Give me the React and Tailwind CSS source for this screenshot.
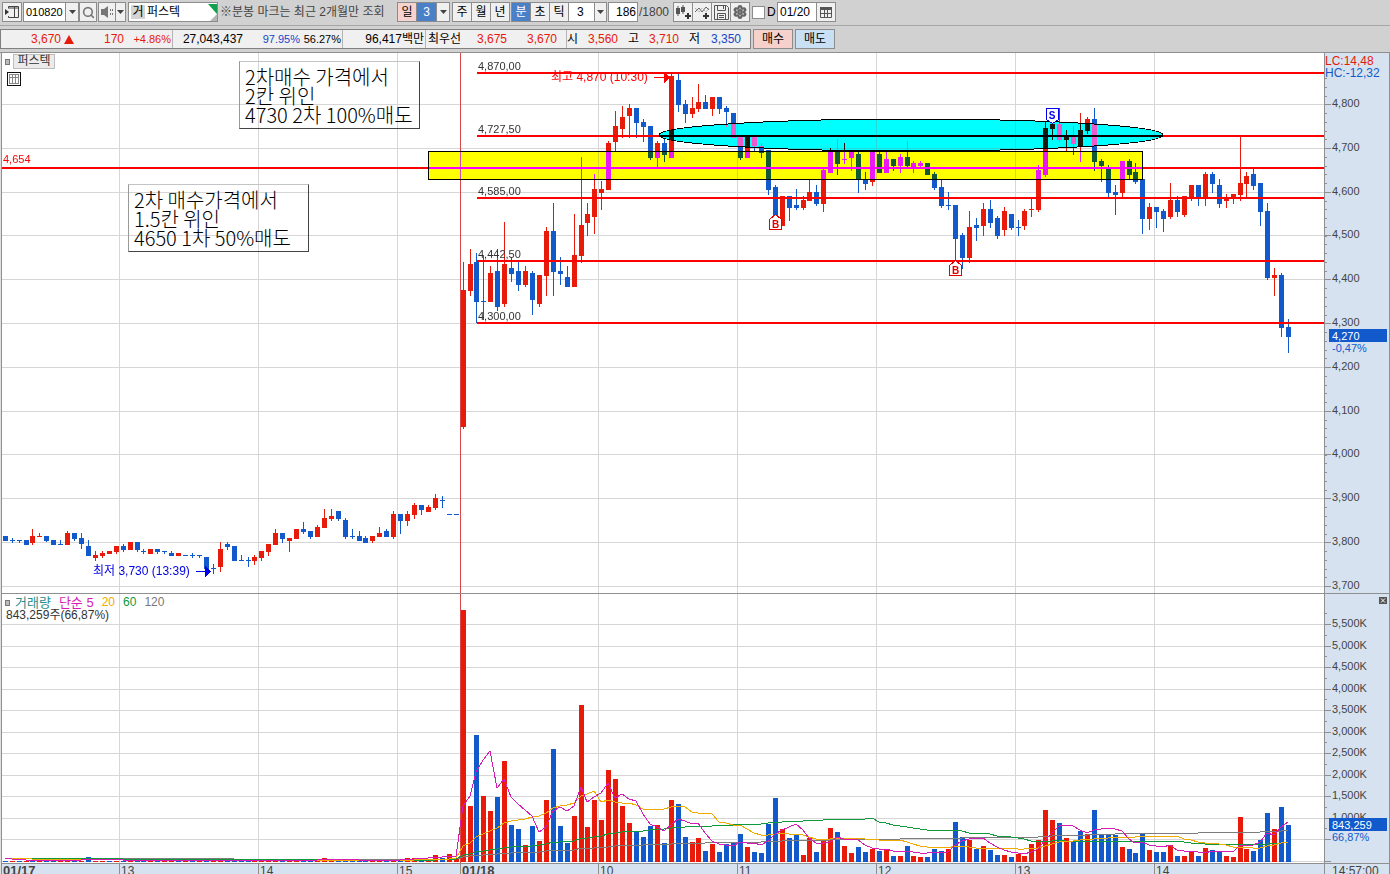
import { Search, Save, Settings } from 'lucide-react';

// direction high top bottom low, one bar per entry
const CANDLES = `
b 536 536 541 541|b 538 540 541 543|b 540 540 541 543|b 540 540 545 545|r 529 536 543 545|r 533 536 537 537
b 536 536 541 542|b 540 540 545 545|b 540 544 545 545|r 531 533 545 545|b 533 533 539 541|b 533 538 544 549
b 540 546 556 556|r 551 555 558 561|r 551 553 556 558|r 551 551 554 554|r 546 546 552 554|b 544 546 550 552
r 542 542 550 550|b 542 542 550 552|b 549 551 552 554|r 549 549 554 554|b 549 549 552 554|b 551 551 552 554
b 551 553 556 556|r 553 553 556 556|b 555 555 556 556|b 553 555 556 558|b 555 555 556 558|b 557 557 569 569
b 564 568 569 574|r 542 549 567 572|b 542 544 547 550|b 546 546 561 561|b 555 560 561 561|b 557 560 561 567
r 555 557 561 565|r 551 551 558 561|r 544 544 552 556|r 529 533 545 545|b 533 533 539 543|r 538 538 541 552
r 529 529 539 539|b 522 529 532 534|b 531 531 537 539|r 525 527 537 537|r 509 518 528 528|r 509 516 519 521
b 511 511 519 521|b 518 520 537 539|b 529 536 537 539|b 531 536 541 541|b 536 538 543 543|r 536 536 541 543
r 527 533 537 537|b 529 531 537 537|r 511 514 537 539|b 514 514 521 534|r 511 514 521 526|r 503 505 515 519
b 505 505 510 515|r 505 507 512 512|r 494 498 508 510|b 496 500 501 508|b 514 514 515 515|b 514 514 515 515
r 262 290 427 429|r 249 264 291 296|b 253 262 302 323|b 256 301 302 320|r 266 273 302 302|b 249 271 307 311
r 222 264 304 307|b 257 268 274 282|b 262 271 285 291|r 266 271 285 287|b 271 273 300 315|r 275 275 304 307
r 227 231 276 296|b 203 231 272 296|b 257 271 274 285|b 266 277 287 287|r 214 255 287 287|r 157 225 256 263
r 203 214 223 236|r 174 189 217 234|r 181 189 193 210|r 141 143 190 190|r 111 126 142 151|r 106 117 129 138
r 104 108 116 138|b 108 108 123 138|b 119 122 127 142|b 126 126 158 160|r 141 143 158 167|b 138 143 155 162
r 73 76 158 158|b 73 80 105 112|b 100 104 114 123|r 97 108 114 118|r 84 102 109 112|b 95 102 109 109
r 97 97 109 116|b 97 97 109 114|b 106 108 112 127|b 113 113 138 138|b 136 136 158 160|r 136 136 158 158
b 136 136 146 151|b 143 146 153 158|b 150 150 190 195|b 185 187 216 218|r 196 196 226 226|b 196 196 208 221
b 189 205 208 210|r 196 200 208 210|r 179 192 201 201|b 185 192 204 206|r 168 170 204 212|r 148 150 173 173
b 139 150 164 175|r 143 159 160 164|r 152 152 158 171|b 151 154 180 193|b 172 180 184 190|r 152 152 182 186
b 152 154 173 173|r 152 159 173 173|b 159 159 166 171|r 154 157 166 173|b 141 157 166 168|r 161 163 168 173
r 161 163 166 168|b 163 163 175 175|b 172 174 188 190|b 179 187 206 208|b 192 205 206 210|b 205 205 239 261
b 233 235 258 269|r 211 227 258 263|b 218 225 228 241|r 203 209 226 236|b 200 209 223 228|b 216 218 236 239
r 207 211 230 236|b 214 214 228 230|b 220 227 228 236|r 209 211 226 230|r 198 209 210 217|r 165 170 210 212
r 122 128 175 177|r 122 124 129 140|b 108 124 140 142|r 130 136 140 151|b 126 136 144 155|r 113 130 146 162
r 117 119 131 134|b 108 119 162 171|b 159 161 166 182|b 165 169 193 197|b 185 192 195 215|r 161 161 193 197
b 159 161 175 179|b 163 172 182 184|b 179 179 219 234|r 203 207 219 230|b 207 207 212 228|b 209 211 219 232
r 183 200 217 219|b 196 200 212 217|r 196 196 215 217|r 185 185 198 201|b 185 185 198 206|r 172 174 198 206
b 172 174 184 193|b 179 185 204 208|r 194 198 201 208|r 194 194 198 204|r 136 183 195 201|r 172 176 184 198
b 168 174 186 190|b 183 183 212 226|b 203 211 278 280|r 268 275 278 296|b 273 275 328 337|b 319 327 337 353`
  .trim()
  .split(/[|\n]/)
  .map((row) => {
    const [dir, ...values] = row.split(' ');
    return [dir, ...values.map(Number)];
  });

// bar heights of the volume pane, each with its colour letter
const VOLUMES = `
b1 r1 b1 r1 b1 r1 b1 b1 r1 r3 b1 r1 b5 r1 r1 b1 r1 b1 r1 b1 b1 r1 b1 r1 r1 b1 r1 b1 r1 b3 r1 r1 b1
b1 b1 b1 r1 r1 r1 r3 b1 r1 r1 b1 b1 r1 r4 r1 b1 b1 b1 b1 b1 r1 r1 b1 r1 b1 r4 r4 b3 r3 r7 b4 r8 r4
r252 r56 b127 r66 r51 b65 r101 b37 b33 r17 b36 r21 r62 b113 b36 b19 r46 r157 r35 r62 r42 r92 r83 r56
r39 b31 b25 b36 r37 b19 r62 b58 b25 r20 r24 b11 r18 b10 b18 b20 b28 r15 b10 b9 b38 b64 r33 b24 b27 r7
r24 b10 r22 r34 b30 r16 r9 b15 b10 r13 b11 r12 b6 r6 b16 r6 r5 b5 b13 b11 r13 b40 b25 r22 b13 r16 b12
b7 r7 b5 r8 r6 r18 r22 r52 r42 b39 r24 b20 b31 r28 b52 b27 b28 b27 r15 b13 b9 b29 r12 b10 b10 r17 b6
r6 r10 b6 r14 b12 b10 r6 r5 r45 r13 b11 b22 b49 r33 b55 b37`
  .trim()
  .split(/\s+/)
  .map((bar) => [bar[0], Number(bar.slice(1))]);

const RED = '#e81a0a';
const BLUE = '#125acb';
const GRID = '#d6d6d6';
const VOLUME_BASE = 862;

const HOUR_LINES = [119, 258, 397, 598, 737, 876, 1015, 1154];
const HOURS = ['13', '14', '15', '10', '11', '12', '13', '14'];
const PRICES = [4800, 4700, 4600, 4500, 4400, 4300, 4200, 4100, 4000, 3900, 3800, 3700];
const VOLUME_STEPS = [5500, 5000, 4500, 4000, 3500, 3000, 2500, 2000, 1500, 1000, 500];
const LEVELS = [
  { y: 73, label: '4,870,00' },
  { y: 136, label: '4,727,50' },
  { y: 198, label: '4,585,00' },
  { y: 261, label: '4,442,50' },
  { y: 323, label: '4,300,00' },
];
const AVERAGES = [
  { size: 120, color: '#7d7d7d' },
  { size: 60, color: '#0f9b3c' },
  { size: 20, color: '#f0ab00' },
  { size: 5, color: '#d61cb4' },
];

const barLeft = (i) => Math.floor(3.25 + 6.937 * i);
const priceY = (price) => Math.round(104 + (4800 - price) * 0.438);
const volumeY = (k) => Math.round(861 - k * 0.0431);
const colorOf = (dir) => (dir === 'r' ? RED : BLUE);

const averagePoints = (size) =>
  VOLUMES.map((_, i) => {
    let sum = 0;
    for (let k = i - size + 1; k <= i; k++) sum += k < 0 ? 3 : VOLUMES[k][1];
    return `${barLeft(i) + 2},${Math.round(VOLUME_BASE - 1 - sum / size)}`;
  }).join(' ');

const Arrow = () => (
  <svg width="7" height="4" viewBox="0 0 7 4" className="shrink-0">
    <path d="M0 0h7L3.5 4z" fill="#444" />
  </svg>
);

const box = 'h-5 shrink-0 border border-[#8c8c8c] flex items-center justify-center';
const face = 'bg-[#f0f0f0]';

const Toolbar = () => (
  <div className="h-[26px] flex items-start pt-[2px] pl-[2px] bg-[#d1d1d1] border-b border-[#a6a6a6] text-[12px] whitespace-nowrap overflow-hidden">
    <button aria-label="창" className={`${box} ${face} w-5`}>
      <svg width="14" height="12" viewBox="0 0 14 12">
        <path d="M3.5 2V.5h10v11h-10V10M9.5.5v11M3 2h10" fill="none" stroke="#444" />
        <path d="M0 3l4 3-4 3z" fill="#333" />
      </svg>
    </button>
    <input aria-label="종목코드" defaultValue="010820" className="h-5 w-[43px] ml-px px-[2px] bg-white border border-[#8c8c8c] text-[11px] shrink-0" />
    <button aria-label="종목 목록" className={`${box} ${face} w-[13px] border-l-0`}><Arrow /></button>
    <button aria-label="검색" className={`${box} ${face} w-[18px]`}><Search size={13} color="#777" strokeWidth={3} className="shrink-0" /></button>
    <button aria-label="소리" className={`${box} ${face} w-[18px] ml-px`}>
      <svg width="13" height="12" viewBox="0 0 13 12">
        <path d="M0 3h3l4-3v12L3 9H0z" fill="#777" />
        <path d="M9 3h1v2H9zM11 3h1v2h-1zM9 7h1v2H9zM11 7h1v2h-1z" fill="#777" />
      </svg>
    </button>
    <button aria-label="소리 설정" className={`${box} ${face} w-[10px] border-l-0`}><Arrow /></button>
    <label className="relative h-5 w-[90px] ml-[2px] shrink-0 flex items-center bg-white border border-[#8c8c8c] p-[2px]">
      <span className="bg-[#d4d4d4] w-[14px] h-full leading-[15px] text-center">거</span>
      <input defaultValue="퍼스텍" className="w-[50px] pl-[2px] bg-transparent" />
      <svg width="9" height="18" className="absolute right-0 top-0">
        <path d="M0 1h9v10z" fill="#12a04e" />
        <path d="M9 11v7H2z" fill="#b5b5b5" />
      </svg>
    </label>
    <span className="w-[177px] ml-[2px] shrink-0 leading-5 text-[#444]">※분봉 마크는 최근 2개월만 조회</span>
    <button className={`${box} w-5 bg-[#f6d3cf]`}>일</button>
    <button className={`${box} w-5 bg-[#4a80c8] text-white border-l-0`}>3</button>
    <button aria-label="일 간격" className={`${box} ${face} w-[13px] border-l-0`}><Arrow /></button>
    <div className="flex ml-[2px]">
      <button className={`${box} ${face} w-5`}>주</button>
      <button className={`${box} ${face} w-[19px] border-l-0`}>월</button>
      <button className={`${box} ${face} w-[19px] border-l-0`}>년</button>
    </div>
    <div className="flex ml-px">
      <button className={`${box} w-5 bg-[#4a80c8] text-white`}>분</button>
      <button className={`${box} ${face} w-[19px] border-l-0`}>초</button>
      <button className={`${box} ${face} w-[19px] border-l-0`}>틱</button>
      <div className="relative">
        <select aria-label="간격" className="appearance-none h-5 w-[38px] pl-2 bg-white border border-l-0 border-[#8c8c8c]">
          <option>3</option>
        </select>
        <span className="absolute right-0 top-0 h-5 w-[13px] bg-[#f0f0f0] border border-[#8c8c8c] flex items-center justify-center pointer-events-none">
          <Arrow />
        </span>
      </div>
    </div>
    <input aria-label="봉 개수" defaultValue="186" className="h-5 w-[30px] ml-px pr-px bg-white border border-[#8c8c8c] text-right shrink-0" />
    <span className="w-[34px] ml-px leading-5 shrink-0 text-[#444]">/1800</span>
    <button aria-label="봉 추가" className={`${box} ${face} w-5`}>
      <svg width="15" height="14" viewBox="0 0 15 14">
        <path d="M0 3h4v6H0zM5 2h4v5H5zM1.500 1h1v10h-1zM6.500 0h1v9h-1z" fill="#555" />
        <path d="M11 8h2v2h2v2h-2v2h-2v-2H9v-2h2z" fill="#333" />
      </svg>
    </button>
    <button aria-label="지표 추가" className={`${box} ${face} w-[19px] border-l-0`}>
      <svg width="15" height="14" viewBox="0 0 15 14">
        <path d="M0 7l4-4 3 4 4-5 3 3" fill="none" stroke="#666" />
        <path d="M0 3l4 4 3-4 4 4 3-4" fill="none" stroke="#999" strokeDasharray="1 1" />
        <path d="M10 8h2v2h2v2h-2v2h-2v-2H8v-2h2z" fill="#333" />
      </svg>
    </button>
    <button aria-label="저장" className={`${box} ${face} w-[19px] border-l-0`}>
      <svg width="15" height="15" viewBox="0 0 15 15" fill="none" stroke="#555">
        <path d="M.5.5h12l2 2v12H.5zM3.500.5v5h8v-5M3.500 14.500v-6h8v6M9.500 1v3M5 10.500h5M5 12.500h5" />
      </svg>
    </button>
    <button aria-label="설정" className={`${box} ${face} w-[19px] border-l-0`}><Settings size={14} color="#666" strokeWidth={4} /></button>
    <label className="flex items-center h-5 w-[25px] ml-[2px] shrink-0 gap-[2px]">
      <input type="checkbox" className="appearance-none w-[13px] h-[13px] bg-white border border-[#8c8c8c]" />
      D
    </label>
    <input aria-label="일자" defaultValue="01/20" className="h-5 w-10 px-[2px] bg-white border border-[#8c8c8c] shrink-0" />
    <button aria-label="달력" className={`${box} ${face} w-[19px] border-l-0`}>
      <svg width="12" height="11" viewBox="0 0 12 11">
        <path d="M.5.5h11v10H.5zM.5 6.500h11M4.500 3v7M7.500 3v7" fill="none" stroke="#555" />
        <path d="M0 0h12v3H0z" fill="#555" />
      </svg>
    </button>
  </div>
);

const QuoteBar = () => (
  <div className="h-[27px] flex items-center bg-[#d1d1d1] border-b border-[#8f8f8f] text-[12px] whitespace-nowrap">
    <div className="h-5 w-[751px] shrink-0 flex items-center border border-[#808080] bg-[#f0f0f0] text-black leading-[18px]">
      <span className="w-[60px] text-right text-[#e81a0a]">3,670</span>
      <svg width="12" height="9" className="ml-[2px]"><path d="M1 9l5-9 5 9z" fill={RED} /></svg>
      <span className="w-[49px] text-right text-[#e81a0a]">170</span>
      <span className="w-[49px] pr-px text-right text-[11px] text-[#e81a0a] border-r border-[#b5b5b5]">+4.86%</span>
      <span className="w-[70px] text-right">27,043,437</span>
      <span className="w-[57px] text-right text-[11px] text-[#1547c8]">97.95%</span>
      <span className="w-[43px] pr-px text-right text-[11px] border-r border-[#b5b5b5]">56.27%</span>
      <span className="w-[83px] pr-px text-right border-r border-[#b5b5b5]">96,417백만</span>
      <span className="w-[38px] pl-[2px]">최우선</span>
      <span className="w-[43px] text-right text-[#e81a0a]">3,675</span>
      <span className="w-[50px] text-right text-[#e81a0a]">3,670</span>
      <span className="w-[21px] ml-[9px] border-l border-[#b5b5b5]">시</span>
      <span className="w-[31px] text-right text-[#e81a0a]">3,560</span>
      <span className="w-[21px] text-right">고</span>
      <span className="w-[40px] text-right text-[#e81a0a]">3,710</span>
      <span className="w-[21px] text-right">저</span>
      <span className="w-[41px] text-right text-[#1547c8]">3,350</span>
    </div>
    <button className="h-5 w-10 ml-[2px] border border-[#8c8c8c] bg-[#f6d0cb]">매수</button>
    <button className="h-5 w-10 ml-[2px] border border-[#8c8c8c] bg-[#c9dff4]">매도</button>
  </div>
);

const Verticals = ({ y1, y2 }) => (
  <>
    {HOUR_LINES.map((x) => (
      <rect key={x} x={x} y={y1} width="1" height={y2 - y1} fill={GRID} />
    ))}
  </>
);

const BuyMark = ({ x, y }) => (
  <g>
    <path d={`M${x - 6} ${y + 14}v-10l6-5 6 5v10z`} fill="#fff" stroke="#e00000" />
    <text x={x} y={y + 12} textAnchor="middle" fontSize="10" fontWeight="bold" fill="#e00000">B</text>
  </g>
);

const PricePlot = () => (
  <svg className="block w-full h-[540px] isolate" shapeRendering="crispEdges" fontSize="11" fill="#333">
    <rect width="100%" height="100%" fill="#fff" />
    <g transform="translate(-2 -53)">
      {PRICES.map((p) => (
        <rect key={p} x="2" y={priceY(p)} width="100%" height="1" fill={GRID} />
      ))}
      <Verticals y1={53} y2={593} />
      <rect x="460" y="53" width="1" height="540" fill="#d84848" />
      {CANDLES.map(([dir, high, top, bottom, low], i) => (
        <g key={i} fill={colorOf(dir)}>
          <rect x={barLeft(i) + 2} y={high} width="1" height={low - high} />
          <rect x={barLeft(i)} y={top} width="5" height={bottom - top} />
        </g>
      ))}
      {LEVELS.map(({ y, label }) => (
        <g key={y}>
          <text x="478" y={y - 3}>{label}</text>
          <rect x="477" y={y - 1} width="100%" height="2" fill="#f00" />
        </g>
      ))}
      <rect x="2" y="167" width="100%" height="2" fill="#f00" />
      <text x="3" y="163" fill="#f00">4,654</text>

      {/* highlighted zones invert the channel they cover */}
      <rect x="428" y="151" width="714" height="29" fill="#0000ff" className="mix-blend-difference" />
      <ellipse cx="911" cy="135" rx="252" ry="16" fill="#ff0000" className="mix-blend-difference" />
      <rect x="428.5" y="151.5" width="714" height="28" fill="none" stroke="#000" />
      <ellipse cx="911" cy="135" rx="252" ry="16" fill="none" stroke="#000" />

      <text x="551" y="81" fontSize="12" fill="#f00">최고 4,870 (10:30)</text>
      <path d="M654 77h10v-5l6 5-6 6v-5h-10z" fill="#f00" />
      <text x="93" y="575" fontSize="12" fill="#0000e6">최저 3,730 (13:39)</text>
      <path d="M196 571h9v-5l6 5-6 6v-5h-9z" fill="#0000e6" />

      <BuyMark x={775.5} y={215.5} />
      <BuyMark x={955.5} y={261.5} />
      <path d="M1046.500 108.500h12v11l-6 4-6-4z" fill="#fff" stroke="#0000f0" />
      <text x="1052" y="119" textAnchor="middle" fontSize="10" fontWeight="bold" fill="#0000f0">S</text>
    </g>
  </svg>
);

const PriceAxis = () => (
  <svg className="block w-full h-[540px]" shapeRendering="crispEdges" fontSize="11" fill="#444">
    <g transform="translate(0 -53)">
      {Array.from({ length: 58 }, (_, i) => (
        <rect key={i} y={Math.round(78 + i * 8.76)} width="2" height="1" fill="#8f8f8f" />
      ))}
      {PRICES.map((p) => (
        <g key={p}>
          <rect y={priceY(p)} width="6" height="1" fill="#8f8f8f" />
          <text x="7" y={priceY(p) + 3}>{p.toLocaleString('en-US')}</text>
        </g>
      ))}
      <text x="0" y="65" fontSize="12" fill={RED}>LC:14,48</text>
      <text x="0" y="77" fontSize="12" fill={BLUE}>HC:-12,32</text>
      <rect x="4" y="329" width="58" height="13" fill={BLUE} />
      <text x="7" y="340" fill="#fff">4,270</text>
      <text x="7" y="352" fill={BLUE}>-0,47%</text>
    </g>
  </svg>
);

const VolumePlot = () => (
  <svg className="block w-full h-[269px]" shapeRendering="crispEdges">
    <rect width="100%" height="100%" fill="#fff" />
    <g transform="translate(-2 -594)">
      {[...VOLUME_STEPS, 0].map((v) => (
        <rect key={v} x="2" y={volumeY(v)} width="100%" height="1" fill={GRID} />
      ))}
      <Verticals y1={594} y2={863} />
      <rect x="460" y="594" width="1" height="269" fill="#d84848" />
      {VOLUMES.map(([dir, h], i) => (
        <rect key={i} x={barLeft(i)} y={VOLUME_BASE - h} width="5" height={h} fill={colorOf(dir)} />
      ))}
      {AVERAGES.map(({ size, color }) => (
        <polyline key={size} points={averagePoints(size)} fill="none" stroke={color} />
      ))}
    </g>
  </svg>
);

const VolumeAxis = () => (
  <svg className="block w-full h-[269px]" shapeRendering="crispEdges" fontSize="11" fill="#444">
    <g transform="translate(0 -594)">
      {VOLUME_STEPS.map((v) => (
        <g key={v}>
          <rect y={volumeY(v)} width="6" height="1" fill="#8f8f8f" />
          <rect y={volumeY(v) - 11} width="2" height="1" fill="#8f8f8f" />
          <text x="7" y={volumeY(v) + 3}>{v.toLocaleString('en-US')}K</text>
        </g>
      ))}
      <rect y="861" width="6" height="1" fill="#8f8f8f" />
      <rect x="6" y="831" width="52" height="12" fill="#d7e2f0" />
      <rect x="4" y="818" width="58" height="13" fill={BLUE} />
      <text x="7" y="829" fill="#fff">843,259</text>
      <text x="7" y="841" fill={BLUE}>66,87%</text>
      <rect x="54" y="597" width="8" height="7" fill="#555" />
      <path d="M56 598.500l4 4M60 598.500l-4 4" stroke="#fff" shapeRendering="auto" />
    </g>
  </svg>
);

const TimeAxis = () => (
  <svg className="block w-full h-[10px]" shapeRendering="crispEdges" fontSize="12" fill="#444">
    <g transform="translate(-2 0)">
      {HOUR_LINES.map((x, i) => (
        <g key={x}>
          <rect x={x} width="1" height="10" fill="#8f8f8f" />
          <text x={x + 2} y="11">{HOURS[i]}</text>
        </g>
      ))}
      <rect x="460" width="1" height="10" fill="#8f8f8f" />
      <text x="3" y="11" fontSize="13" fontWeight="bold">01/17</text>
      <text x="462" y="11" fontSize="13" fontWeight="bold">01/18</text>
    </g>
  </svg>
);

const Marker = () => <span className="w-[5px] h-[6px] bg-[#bbb] border border-[#777]" />;

const axis = 'w-[66px] shrink-0 bg-[#d7e2f0] border-l border-r border-[#8f8f8f]';
const note = "absolute bg-transparent border border-t-[#c4c4c4] border-l-[#999] border-r-[#444] border-b-[#444] pl-[5px] pt-[5px] font-['Noto_Sans_CJK_KR',sans-serif] text-[20px] leading-[19px] font-light text-black whitespace-nowrap";

const App = () => (
  <div className="bg-[#e0e0e0] overflow-hidden font-['Liberation_Sans','Noto_Sans_CJK_KR',sans-serif] text-black">
    <Toolbar />
    <QuoteBar />
    <main className="ml-px border-l border-[#8f8f8f]">
      <section className="flex border-b border-[#8f8f8f]">
        <div className="relative flex-1 min-w-0">
          <PricePlot />
          <div className="absolute left-[3px] top-px flex items-center gap-[3px] text-[12px] leading-[13px] text-[#333]">
            <Marker />
            <span className="bg-[#ebebeb] border border-[#bdbdbd] w-[42px] text-center">퍼스텍</span>
          </div>
          <svg width="14" height="14" className="absolute left-[5px] top-[19px]" shapeRendering="crispEdges">
            <path d="M.5.5h13v13H.5z" fill="#fff" stroke="#111" />
            <path d="M2.500 2.500h9v9h-9zM2.500 5.500h9M5.500 2.500v9M8.500 2.500v9" fill="none" stroke="#888" />
          </svg>
          <div className={`${note} left-[237px] top-[8px] w-[181px] h-[68px]`}>
            <p>2차매수 가격에서</p>
            <p>2칸 위인</p>
            <p>4730 2차 100%매도</p>
          </div>
          <div className={`${note} left-[126px] top-[131px] w-[181px] h-[68px]`}>
            <p>2차 매수가격에서</p>
            <p>1.5칸 위인</p>
            <p>4650 1차 50%매도</p>
          </div>
        </div>
        <div className={axis}><PriceAxis /></div>
      </section>
      <section className="flex border-b border-[#8f8f8f]">
        <div className="relative flex-1 min-w-0">
          <VolumePlot />
          <div className="absolute left-[3px] top-[2px] flex items-center gap-2 text-[12px] leading-[13px]">
            <span className="flex items-center gap-[5px] text-[13px] text-[#2a8c8c]"><Marker />거래량</span>
            <span className="text-[13px] text-[#d61cb4]">단순 5</span>
            <span className="text-[#f0ab00]">20</span>
            <span className="text-[#0f9b3c]">60</span>
            <span className="text-[#777]">120</span>
          </div>
          <p className="absolute left-1 top-[15px] text-[12px] leading-[13px] text-[#333]">843,259주(66,87%)</p>
        </div>
        <div className={axis}><VolumeAxis /></div>
      </section>
      <section className="flex bg-[#d7e2f0] overflow-hidden">
        <div className="flex-1 min-w-0"><TimeAxis /></div>
        <div className={axis}>
          <svg className="block w-full h-[10px]" fontSize="12" fill="#444">
            <text x="7" y="11">14:57:00</text>
          </svg>
        </div>
      </section>
    </main>
  </div>
);

export default App;
